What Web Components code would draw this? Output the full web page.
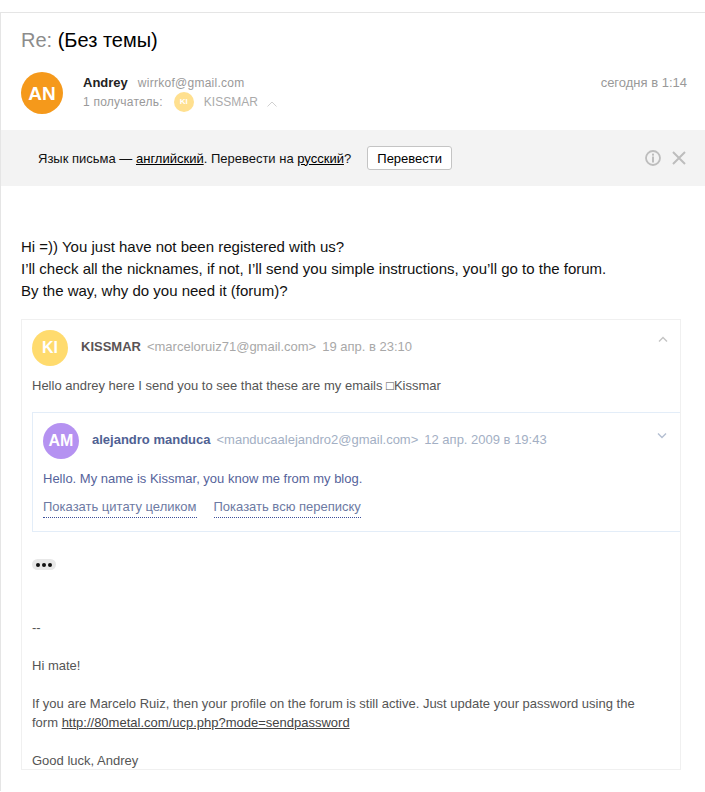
<!DOCTYPE html>
<html lang="ru"><head><meta charset="utf-8"><title>Re: (Без темы)</title>
<style>html,body{margin:0;padding:0;background:#fff}body{font-family:"Liberation Sans",Arial,sans-serif;height:792px;overflow:hidden}</style>
</head><body>
<mail-view></mail-view>
<script>
function esc(s){return String(s).replace(/&/g,'&amp;').replace(/</g,'&lt;').replace(/>/g,'&gt;');}
function def(name, css, html){
  customElements.define(name, class extends HTMLElement{
    constructor(){super();const r=this.attachShadow({mode:'open'});r.innerHTML='<style>'+css+'</style>'+html(this);}
  });
}
def('mail-avatar',`:host{display:flex;align-items:center;justify-content:center;border-radius:50%;color:#fff;font-weight:700;flex:none;width:var(--s,36px);height:var(--s,36px);background:var(--c,#ccc);font-size:var(--f,16px);line-height:1;}`,()=>'<slot></slot>');
def('translate-bar',`
:host{display:flex;align-items:center;height:56px;background:#f3f3f3;padding:0 19px 0 37px;color:#111;font-size:13px}
a{color:#000;text-decoration:underline}
.t{white-space:nowrap}
button{margin-left:16px;height:24px;width:85px;padding:0;background:#fff;border:1px solid #c4c4c4;border-radius:3px;font:13px "Liberation Sans",Arial,sans-serif;color:#000}
.sp{flex:1}
svg{display:block}
.i{margin-right:11px}
`,()=>`<span class="t">Язык письма — <a>английский</a>. Перевести на <a>русский</a>?</span><button>Перевести</button><span class="sp"></span>
<svg class="i" width="16" height="16" viewBox="0 0 16 16" fill="none"><circle cx="8" cy="8" r="7" stroke="#bdbdbd" stroke-width="1.800"/><rect x="7" y="3.600" width="2" height="2" fill="#bdbdbd"/><rect x="7" y="6.500" width="2" height="6" fill="#bdbdbd"/></svg>
<svg width="14" height="14" viewBox="0 0 14 14" fill="none"><path d="M1 1l12 12M13 1L1 13" stroke="#bdbdbd" stroke-width="2"/></svg>`);
def('quote-head',`
:host{display:flex;align-items:center;font-size:13px;white-space:nowrap;position:relative}
.a{margin-right:13px}
b,.m,.d{margin-bottom:4px}
b{color:var(--name);margin-right:6px;font-size:13px}
span.m{color:var(--meta)}
.d{margin-left:6px;color:var(--meta)}
svg{position:absolute;right:var(--cr,12px);top:var(--ct,7px)}
`,h=>`<mail-avatar class="a" style="--s:36px;--c:${h.getAttribute('color')};--f:16px">${h.getAttribute('ini')}</mail-avatar><b>${h.getAttribute('name')}</b><span class="m">${esc(h.getAttribute('mail'))}</span><span class="d">${h.getAttribute('date')}</span>
<svg width="10" height="7" viewBox="0 0 10 7" fill="none"><path d="${h.getAttribute('dir')==='up'?'M1 5.500L5 1.500L9 5.500':'M1 1.500L5 5.500L9 1.500'}" stroke="${h.getAttribute('chev')}" stroke-width="1.400"/></svg>`);
def('inner-quote',`
:host{display:block;margin:16px -1px 0 0;border:1px solid #e3edf8;padding:10px 0 14px 10px;color:#5c6aa0;font-size:13px;box-sizing:border-box;height:120px}
quote-head{--name:#4f6193;--meta:#a3afc4;--cr:13px;--ct:9px}
p{margin:10px 0 0;line-height:20px;color:#56639b}
.links{margin-top:9px;display:flex;gap:17px;line-height:18px}
a{color:#6d7aa3;border-bottom:1px dotted #3d4f9a;padding-bottom:1px}
`,()=>`<quote-head ini="AM" color="#b592f1" name="alejandro manduca" mail="<manducaalejandro2@gmail.com>" date="12 апр. 2009 в 19:43" dir="down" chev="#b4bfd2"></quote-head>
<p>Hello. My name is Kissmar, you know me from my blog.</p>
<div class="links"><a>Показать цитату целиком</a><a>Показать всю переписку</a></div>`);
def('outer-quote',`
:host{display:block;margin:17px 0 0 20px;width:648px;height:439px;overflow:hidden;border:1px solid #f0f0f0;padding:10px 0 0 10px;color:#555;font-size:13px;line-height:19px;box-sizing:content-box}
quote-head{--name:#5a5355;--meta:#a8a8a8;--cr:12px;--ct:6px}
.hello{margin:10px 0 0;line-height:20px;color:#555}
.dots{display:flex;gap:2px;align-items:center;justify-content:center;width:24px;height:11px;border-radius:6px;background:#e8e8e8;margin:27px 0 0 0}
.dots i{display:block;width:4px;height:4px;border-radius:50%;background:#111}
.sig{margin-top:48px}
.sig p{margin:0 0 19px}
a{color:#444;text-decoration:underline}
`,()=>`<quote-head ini="KI" color="#ffdb6e" name="KISSMAR" mail="<marceloruiz71@gmail.com>" date="19 апр. в 23:10" dir="up" chev="#c4c4c4"></quote-head>
<div class="hello">Hello andrey here I send you to see that these are my emails □Kissmar</div>
<inner-quote></inner-quote>
<div class="dots"><i></i><i></i><i></i></div>
<div class="sig"><p>--</p><p>Hi mate!</p><p>If you are Marcelo Ruiz, then your profile on the forum is still active. Just update your password using the<br>form <a>http://80metal.com/ucp.php?mode=sendpassword</a></p><p>Good luck, Andrey</p></div>`);
def('mail-view',`
:host{display:block;margin-top:12px;border-top:1px solid #e5e5e5;border-left:1px solid #e5e5e5;height:779px;box-sizing:border-box;overflow:hidden}
h1{margin:0;padding:16px 0 0 20px;font-size:20px;font-weight:400;line-height:23px;color:#000;height:23px}
h1 span{color:#8c8c8c}
.head{display:flex;margin:20px 18px 0 20px;height:42px;position:relative}
.who{margin-left:20px;padding-top:1px}
.l1{display:flex;align-items:baseline;height:19px;line-height:19px}
.l1 b{font-size:13px;color:#222}
.l1 span{margin-left:10px;font-size:12px;color:#999;letter-spacing:.27px}
.l2{display:flex;align-items:center;height:20px;margin-top:0;font-size:12px;color:#999;letter-spacing:.23px;white-space:nowrap}
.l2 mail-avatar{margin:0 10px 0 11px;letter-spacing:0}
.l2 .n{color:#aaa;letter-spacing:0;font-size:12px}
.l2 svg{margin-left:9px;margin-top:3px}
.date{margin-left:auto;font-size:13px;color:#999;line-height:19px;padding-top:1px}
translate-bar{margin-top:16px}
.body{margin:50px 0 0 20px;font-size:15px;line-height:22px;color:#111;width:660px}
`,()=>`<h1><span>Re:</span> (Без темы)</h1>
<div class="head"><mail-avatar style="--s:42px;--c:#f5991b;--f:19px">AN</mail-avatar>
<div class="who"><div class="l1"><b>Andrey</b><span>wirrkof@gmail.com</span></div>
<div class="l2">1 получатель:<mail-avatar style="--s:20px;--c:#ffe08f;--f:8px">KI</mail-avatar><span class="n">KISSMAR</span><svg width="10" height="6" viewBox="0 0 10 6" fill="none"><path d="M.5 5.500L5 1l4.500 4.500" stroke="#d0d0d0"/></svg></div></div>
<div class="date">сегодня в 1:14</div></div>
<translate-bar></translate-bar>
<div class="body">Hi =)) You just have not been registered with us?<br>I’ll check all the nicknames, if not, I’ll send you simple instructions, you’ll go to the forum.<br>By the way, why do you need it (forum)?</div>
<outer-quote></outer-quote>`);
</script>
</body></html>
